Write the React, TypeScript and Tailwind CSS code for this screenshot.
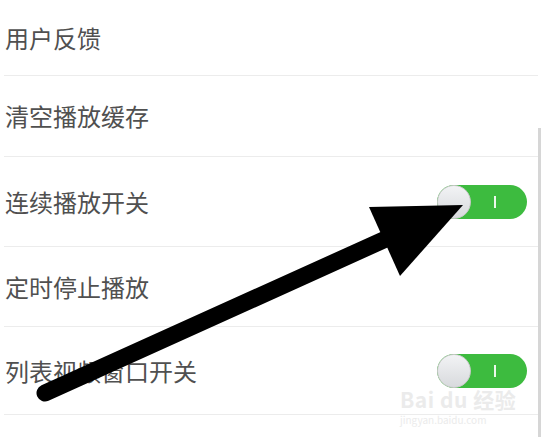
const Toggle = () => (
  <div className="relative mr-[11px] h-[34px] w-[90px] rounded-full bg-[#3dbb3f]">
    <div className="absolute left-[57px] top-[11px] h-[12px] w-[2px] bg-white/90" />
    <div className="absolute left-0 top-0 h-[34px] w-[34px] rounded-full border border-[#c9c9c9] bg-gradient-to-b from-[#f2f3f5] to-[#d8dadd]" />
  </div>
);

const rows = [
  { label: "用户反馈", h: "h-[76px]", toggle: false },
  { label: "清空播放缓存", h: "h-[81px]", toggle: false },
  { label: "连续播放开关", h: "h-[90px]", toggle: true },
  { label: "定时停止播放", h: "h-[80px]", toggle: false },
  { label: "列表视频窗口开关", h: "h-[88px]", toggle: true },
];

export default function App() {
  return (
    <div
      className="relative h-[437px] w-[542px] overflow-hidden bg-white"
      style={{ fontFamily: '"Noto Sans CJK SC", "Noto Sans", sans-serif' }}
    >
      <div className="ml-1 mr-[4px]">
        {rows.map((r) => (
          <div
            key={r.label}
            className={`flex ${r.h} items-center justify-between border-b border-[#ececec] pl-[1px]`}
          >
            <span className="text-[24px] text-[#505050]">{r.label}</span>
            {r.toggle && <Toggle />}
          </div>
        ))}
      </div>

      <div className="absolute right-[1px] top-[128px] h-[309px] w-[3px] bg-[#d6d6d6]" />

      <div className="absolute left-[400px] top-[388px] flex select-none flex-col gap-[4px] text-[#ebebeb]">
        <div className="text-[21px] font-bold leading-[22px] tracking-wide">Bai du 经验</div>
        <div className="text-[10px] leading-[11px]">jingyan.baidu.com</div>
      </div>

      <svg className="absolute left-0 top-0" width="542" height="437">
        <line x1="45" y1="393" x2="388" y2="238" stroke="#000" strokeWidth="17" strokeLinecap="round" />
        <polygon points="369,207 463,205 400,276" fill="#000" />
      </svg>
    </div>
  );
}
